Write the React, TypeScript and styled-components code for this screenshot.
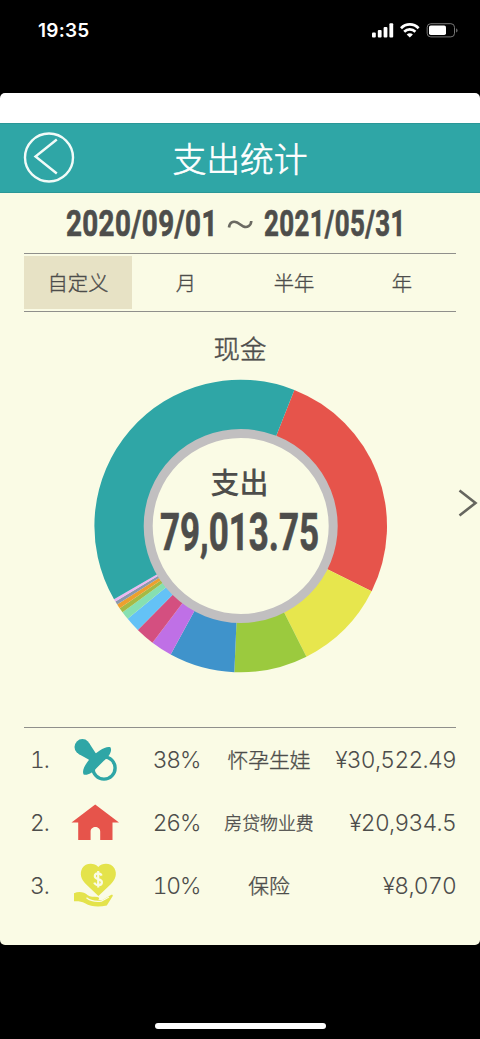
import React from 'react';
import styled, { createGlobalStyle } from 'styled-components';

const Global = createGlobalStyle`
  * { box-sizing: border-box; }
  body { margin: 0; background: #000; }
`;

const cjk = `"Noto Sans CJK SC", sans-serif`;

const Phone = styled.div`
  width: 480px;
  height: 1039px;
  display: flex;
  flex-direction: column;
  background: #000;
  color: #4d4d4b;
  font-family: ${cjk};
  overflow: hidden;
`;

const StatusBar = styled.header`
  height: 93px;
  padding: 20px 22px 0 38px;
  display: flex;
  justify-content: space-between;
  align-items: flex-start;
  color: #fff;
`;

const Clock = styled.span`
  font: 600 19px/22px Inter, sans-serif;
  letter-spacing: 0.25px;
`;

const StatusIcons = styled.svg`
  display: block;
  width: 86px;
  height: 22px;
`;

const Sheet = styled.main`
  height: 852px;
  padding-top: 30px;
  border-radius: 5px;
  background: linear-gradient(#fff 30px, #fafbe5 30px);
  display: flex;
  flex-direction: column;
  overflow: hidden;
`;

const TitleBar = styled.div`
  height: 70px;
  display: grid;
  grid-template-columns: 98px 1fr 98px;
  align-items: center;
  background: #2fa6a6;
  border-top: 1px solid #2a9797;
  border-bottom: 1px solid #2a9797;
`;

const BackButton = styled.button`
  width: 52px;
  height: 52px;
  margin: 0 0 0 23px;
  padding: 0;
  border: 0;
  background: none;
  svg { display: block; }
`;

const Title = styled.h1`
  margin: 0;
  padding-bottom: 1px;
  text-align: center;
  font: 300 33.8px/50px ${cjk};
  -webkit-text-stroke: 0.6px currentColor;
  color: #fff;
`;

const DateRange = styled.div`
  height: 60px;
  padding: 0 75px 0 66px;
  display: flex;
  justify-content: space-between;
  align-items: center;
`;

const Squeezed = styled.span<{ $size: number; $width: number; $scale: number; $gap?: number }>`
  display: block;
  width: ${p => p.$width}px;
  font: 700 ${p => p.$size}px/${p => p.$size + 4}px Roboto, sans-serif;
  letter-spacing: ${p => p.$gap ?? 0}px;
  white-space: nowrap;
  -webkit-text-stroke: 0.7px currentColor;
  transform: scaleX(${p => p.$scale});
  transform-origin: 0 50%;
`;

const Tabs = styled.nav`
  height: 59px;
  margin: 0 24px;
  padding: 2px 0;
  display: grid;
  grid-template-columns: repeat(4, 1fr);
  border-top: 1px solid #8f8f8b;
  border-bottom: 1px solid #8f8f8b;
`;

const Tab = styled.span<{ $active?: boolean }>`
  display: flex;
  align-items: center;
  justify-content: center;
  padding-bottom: 1px;
  font-size: 20.3px;
  font-weight: 300;
  line-height: 28px;
  -webkit-text-stroke: 0.35px currentColor;
  background: ${p => (p.$active ? '#e7e2c5' : 'transparent')};
`;

const ChartArea = styled.section`
  position: relative;
  height: 415px;
  display: flex;
  flex-direction: column;
  align-items: center;
`;

const Account = styled.h2`
  margin: 16px 0 0;
  font: 300 26.5px/40px ${cjk};
  -webkit-text-stroke: 0.45px currentColor;
`;

const Donut = styled.div`
  width: 294px;
  height: 294px;
  margin: 11px 0 0 1px;
  display: grid;
  > * { grid-area: 1 / 1; }
`;

const DonutLabel = styled.div`
  z-index: 1;
  padding: 81px 0 0 66px;
`;

const Kind = styled.div`
  width: 160px;
  margin-bottom: 3px;
  text-align: center;
  font: 500 29px/42px ${cjk};
`;

const NextArrow = styled.svg`
  position: absolute;
  right: 2px;
  top: 176px;
`;

const List = styled.ol`
  margin: 0 24px;
  padding: 0;
  list-style: none;
  border-top: 1px solid #8f8f8b;
`;

const Row = styled.li`
  height: 63px;
  display: grid;
  grid-template-columns: 44px 58px 101px 84px 1fr;
  align-items: center;
`;

const Num = styled.span<{ $align?: string }>`
  font: 300 22.8px/28px Inter, sans-serif;
  font-feature-settings: 'tnum';
  letter-spacing: ${p => (p.$align === 'right' ? -0.7 : -1.1)}px;
  white-space: nowrap;
  text-align: ${p => p.$align ?? 'left'};
`;

const Rank = styled(Num)`
  padding-left: 6px;
`;

const Category = styled.span<{ $small?: boolean }>`
  display: flex;
  justify-content: center;
  padding-bottom: 2px;
  font-size: ${p => (p.$small ? 17.9 : 20.8)}px;
  font-weight: 300;
  line-height: 28px;
  white-space: nowrap;
  -webkit-text-stroke: 0.35px currentColor;
`;

const HomeBar = styled.div`
  width: 171px;
  height: 6px;
  margin: 78px auto 0;
  border-radius: 3px;
  background: #fff;
`;

const slices: [string, number, number][] = [
  ['#e6544b', 21.5, 116.5],
  ['#e7e64d', 116.5, 153.3],
  ['#9bca3e', 153.3, 182.5],
  ['#3f93cb', 182.5, 208.6],
  ['#bf70e6', 208.6, 217.1],
  ['#d44f80', 217.1, 224.7],
  ['#64c2f6', 224.7, 230.6],
  ['#86e0b2', 230.6, 233.9],
  ['#a5ba45', 233.9, 235.8],
  ['#eda02e', 235.8, 237.6],
  ['#8b98ad', 237.6, 238.9],
  ['#ecb6f2', 238.9, 240],
  ['#2fa6a6', 240, 381.5],
];

const point = (deg: number) => {
  const a = (deg * Math.PI) / 180;
  return `${(146.7 + 146.3 * Math.sin(a)).toFixed(2)} ${(147 - 146.3 * Math.cos(a)).toFixed(2)}`;
};

const DonutChart = () => (
  <svg width="294" height="294" viewBox="0 0 294 294">
    {slices.map(([color, from, to]) => (
      <path key={from} fill={color} d={`M146.7 147L${point(from)}A146.3 146.3 0 0 1 ${point(to)}Z`} />
    ))}
    <circle cx="146.7" cy="147" r="92.5" fill="#fafbe5" stroke="#c1bfc0" strokeWidth="9" />
  </svg>
);

const Pacifier = () => (
  <svg width="54" height="54" viewBox="0 0 54 54">
    <circle cx="36" cy="35" r="11.1" fill="none" stroke="#2fa6a6" strokeWidth="3.4" />
    <g fill="#2fa6a6">
      <circle cx="14.4" cy="14" r="7.9" />
      <path d="M21.4 10.4L27.6 20L32 24L24 32L20.6 26.4L10.2 20.7Z" />
      <path d="M42.4 14.3C44.6 18 41 24 35.6 28L28.6 35C24.6 40.2 18.6 42.8 15.6 41.4C13.6 38 17 31 22.6 25.2C28.6 18.6 38.2 12.4 42.4 14.3Z" />
    </g>
  </svg>
);

const House = () => (
  <svg width="54" height="54" viewBox="0 0 54 54" fill="#e6544b">
    <path d="M27.2 8.5L51 26.4H44.5V44H32.2V35.5C32.2 29.5 22.6 29.5 22.6 35.5V44H10.2V26.4H3.5Z" />
  </svg>
);

const HeartHand = () => (
  <svg width="54" height="54" viewBox="0 0 54 54">
    <g fill="#e4e34b">
      <path d="M30.3 8C34.3 3.4 43 3.6 46.4 9.2C49.6 15 47.2 20.6 43 25L30.4 37L17.8 25C13.4 20.6 11.2 15 14.2 9.2C17.6 3.6 26.3 3.4 30.3 8Z" />
      <path d="M6 34.2C10.5 32 16 32.6 19.8 36.2C22 38 26 37.6 29.5 38C31.5 38.3 31.8 40.4 30 40.8L34 41.2L42.5 36.2C44 35.2 45.4 35.8 44.6 37.2L38.8 46.6C31 48 23 48 17 44.2C13.5 42.2 10 42 6 42.2Z" />
    </g>
    <path d="M18.5 38.8C22 41.8 27.5 42.8 33.4 42.2L41 38" fill="none" stroke="#fafbe5" strokeWidth="1.3" />
    <path d="M33.6 16.6C32.2 13.4 26.8 13.8 26.8 17.2C26.8 21 33.9 19.2 33.9 23.2C33.9 26.9 27.8 27 26.2 23.6M30.2 12V28.6" fill="none" stroke="#fafbe5" strokeWidth="2.2" />
  </svg>
);

const rows = [
  { icon: <Pacifier />, pct: '38%', name: '怀孕生娃', sum: '¥30,522.49' },
  { icon: <House />, pct: '26%', name: '房贷物业费', sum: '¥20,934.5', small: true },
  { icon: <HeartHand />, pct: '10%', name: '保险', sum: '¥8,070' },
];

export default function App() {
  return (
    <Phone>
      <Global />
      <StatusBar>
        <Clock>19:35</Clock>
        <StatusIcons viewBox="0 0 86 22">
          <g fill="#fff">
            <rect x="0" y="12.5" width="3.8" height="5" rx="1" />
            <rect x="5.8" y="10" width="3.8" height="7.5" rx="1" />
            <rect x="11.6" y="7" width="3.8" height="10.5" rx="1" />
            <rect x="17.4" y="3.3" width="3.8" height="14.2" rx="1" />
            <path d="M37.8 17.6L34.7 14.4C36.5 12.9 39.1 12.9 40.9 14.4Z" />
            <rect x="57" y="5.5" width="17" height="9.6" rx="1.8" />
            <path d="M84.2 8.3C86 9.2 86 11.7 84.2 12.6Z" fill="#777" />
          </g>
          <path d="M29 8.2C34 3.2 41.6 3.2 46.6 8.2M32.2 11.7C35.3 8.7 40.3 8.7 43.4 11.7" fill="none" stroke="#fff" strokeWidth="2.7" />
          <rect x="55.2" y="3.7" width="27.3" height="13.2" rx="3.6" fill="none" stroke="#777" />
        </StatusIcons>
      </StatusBar>
      <Sheet>
        <TitleBar>
          <BackButton aria-label="返回">
            <svg width="52" height="52" viewBox="0 0 52 52" fill="none" stroke="#f1fbf8" strokeWidth="2.4">
              <circle cx="26" cy="25.5" r="24" />
              <path d="M33.8 7.5L12.5 24.5L33.8 41.5" />
            </svg>
          </BackButton>
          <Title>支出统计</Title>
        </TitleBar>
        <DateRange>
          <Squeezed $size={37} $width={150} $scale={0.75} $gap={0.5}>2020/09/01</Squeezed>
          <svg width="26" height="12" viewBox="0 0 26 12" fill="none" stroke="#6b6a62" strokeWidth="2.6">
            <path d="M2 10.5C2.5 5.5 6 3.5 10 5.5L16.5 9.5C20 11 24 9 24.3 4" />
          </svg>
          <Squeezed $size={37} $width={141} $scale={0.7} $gap={0.5}>2021/05/31</Squeezed>
        </DateRange>
        <Tabs>
          <Tab $active>自定义</Tab>
          <Tab>月</Tab>
          <Tab>半年</Tab>
          <Tab>年</Tab>
        </Tabs>
        <ChartArea>
          <Account>现金</Account>
          <Donut>
            <DonutChart />
            <DonutLabel>
              <Kind>支出</Kind>
              <Squeezed $size={52} $width={160} $scale={0.672}>79,013.75</Squeezed>
            </DonutLabel>
          </Donut>
          <NextArrow width="20" height="30" viewBox="0 0 20 30" fill="none" stroke="#66665f" strokeWidth="2.6">
            <path d="M1.5 2.5L17.5 15L1.5 27.5" />
          </NextArrow>
        </ChartArea>
        <List>
          {rows.map((r, i) => (
            <Row key={r.name}>
              <Rank>{i + 1}.</Rank>
              {r.icon}
              <Num $align="center">{r.pct}</Num>
              <Category $small={r.small}>{r.name}</Category>
              <Num $align="right">{r.sum}</Num>
            </Row>
          ))}
        </List>
      </Sheet>
      <HomeBar />
    </Phone>
  );
}
